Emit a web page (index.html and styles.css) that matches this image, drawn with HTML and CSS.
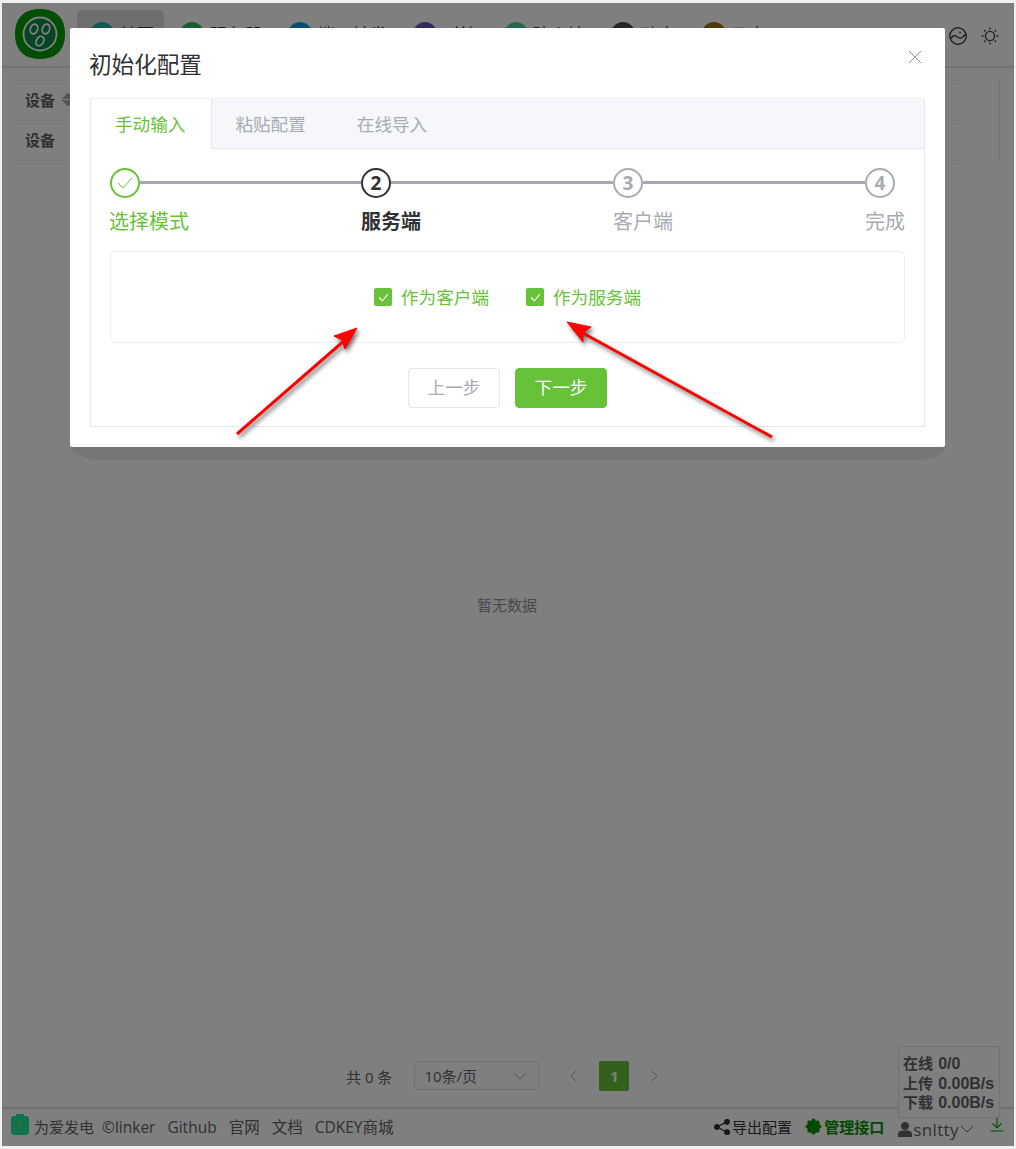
FILE: index.html
```html
<!DOCTYPE html>
<html lang="zh-CN">

<head>
	<meta charset="UTF-8">
	<title>初始化配置</title>
	<link rel="stylesheet" href="styles.css">
</head>

<body>
	<div id="app">
		<header class="topbar">
			<div class="logo">
				<svg width="50" height="50" viewBox="0 0 50 50">
					<path class="logo-bg" d="M25 0C41 0 50 9 50 25S41 50 25 50 0 41 0 25 9 0 25 0Z" />
					<circle class="logo-ring" cx="25" cy="25" r="16.5" />
					<ellipse class="logo-seed" cx="19" cy="20" rx="3.6" ry="5" transform="rotate(20 19 20)" />
					<ellipse class="logo-seed" cx="31" cy="20" rx="3.6" ry="5" transform="rotate(20 31 20)" />
					<ellipse class="logo-seed" cx="25" cy="32" rx="3.6" ry="5" transform="rotate(30 25 32)" />
				</svg>
			</div>
			<nav class="menu">
				<a class="menu-item active"><i class="dot teal"></i>首页</a>
				<a class="menu-item"><i class="dot green"></i>服务器</a>
				<a class="menu-item"><i class="dot blue"></i>端口转发</a>
				<a class="menu-item"><i class="dot purple"></i>对等</a>
				<a class="menu-item"><i class="dot mint"></i>防火墙</a>
				<a class="menu-item"><i class="dot dark"></i>动态</a>
				<a class="menu-item"><i class="dot brown"></i>日志</a>
			</nav>
			<div class="top-icons">
				<svg width="20" height="20" viewBox="0 0 20 20">
					<circle cx="10" cy="10" r="8.2" />
					<path d="M2.4 13C5 9 7 9 9.5 11S14 13 17.6 8" />
					<circle class="fill" cx="12" cy="6.5" r="0.9" />
				</svg>
				<svg width="20" height="20" viewBox="0 0 20 20">
					<circle cx="10" cy="10" r="4.6" />
					<path d="M10 1.5V3.5M10 16.5V18.5M1.5 10H3.5M16.5 10H18.5M4 4L5.4 5.4M14.6 14.6L16 16M4 16L5.4 14.6M14.6 5.4L16 4" />
				</svg>
			</div>
		</header>

		<main class="content">
			<div class="table">
				<div class="table-row"><b>设备</b><span class="sort"></span></div>
				<div class="table-row"><b>设备</b></div>
			</div>
			<div class="empty">暂无数据</div>
			<div class="pager">
				<span>共 0 条</span>
				<div class="page-size">10条/页
					<svg width="14" height="8" viewBox="0 0 14 8"><path d="M1 1L7 7L13 1" /></svg>
				</div>
				<div class="pages">
					<svg width="8" height="12" viewBox="0 0 8 12"><path d="M7 1L2 6L7 11" /></svg>
					<span class="page-num">1</span>
					<svg width="8" height="12" viewBox="0 0 8 12"><path d="M1 1L6 6L1 11" /></svg>
				</div>
			</div>
		</main>

		<footer class="footer">
			<div class="footer-links">
				<svg class="battery" width="18" height="21" viewBox="0 0 18 21">
					<path class="battery-body" d="M5 0H13V2H15.500Q18 2 18 5V18Q18 21 15 21H3Q0 21 0 18V5Q0 2 2.500 2H5Z" />
					<path class="battery-bolt" d="M10 7L6 12H8.500L7.500 16L12 10.500H9.500Z" />
				</svg>
				<a class="sponsor">为爱发电</a>
				<a>©linker</a>
				<a>Github</a>
				<a>官网</a>
				<a>文档</a>
				<a>CDKEY商城</a>
			</div>
			<div class="footer-tools">
				<a class="tool">
					<svg width="16" height="16" viewBox="0 0 16 16">
						<circle cx="3" cy="8" r="2.600" />
						<circle cx="13" cy="2.800" r="2.600" />
						<circle cx="13" cy="13.200" r="2.600" />
						<path d="M3 8L13 2.800M3 8L13 13.200" />
					</svg>导出配置
				</a>
				<a class="tool manage">
					<svg width="17" height="17" viewBox="0 0 17 17">
						<circle cx="8.500" cy="8.500" r="5" />
						<path d="M8.500 0.800V16.200M0.800 8.500H16.200M3.100 3.100L13.900 13.900M3.100 13.900L13.900 3.100" />
					</svg>管理接口
				</a>
				<a class="tool user">
					<svg width="14" height="15" viewBox="0 0 14 15">
						<circle cx="7" cy="4" r="3.600" />
						<path d="M0 15V12.500Q0 9 4 8.500H10Q14 9 14 12.500V15Z" />
					</svg>snltty
					<svg class="chevron" width="14" height="8" viewBox="0 0 14 8"><path d="M1 1L7 7L13 1" /></svg>
				</a>
				<svg class="download" width="14" height="15" viewBox="0 0 14 15">
					<path d="M7 1V10.500M2.500 6.500L7 11L11.500 6.500M0.500 14H13.500" />
				</svg>
			</div>
		</footer>

		<div class="stats">
			<div>在线 <span class="val">0/0</span></div>
			<div>上传 <span class="val">0.00B/s</span></div>
			<div>下载 <span class="val">0.00B/s</span></div>
		</div>
	</div>

	<div class="overlay"></div>

	<section class="modal">
		<div class="modal-head">
			<h2>初始化配置</h2>
			<svg class="close" width="14" height="14" viewBox="0 0 14 14"><path d="M1 1L13 13M13 1L1 13" /></svg>
		</div>
		<div class="tabs">
			<div class="tab-bar">
				<a class="tab active">手动输入</a>
				<a class="tab">粘贴配置</a>
				<a class="tab">在线导入</a>
			</div>
			<div class="tab-body">
				<div class="steps">
					<div class="step done">
						<div class="step-head">
							<span class="step-icon">
								<svg width="16" height="12" viewBox="0 0 16 12"><path d="M1 6L6 11L15 1" /></svg>
							</span>
							<span class="step-line"></span>
						</div>
						<div class="step-title">选择模式</div>
					</div>
					<div class="step current">
						<div class="step-head">
							<span class="step-icon">2</span>
							<span class="step-line"></span>
						</div>
						<div class="step-title">服务端</div>
					</div>
					<div class="step">
						<div class="step-head">
							<span class="step-icon">3</span>
							<span class="step-line"></span>
						</div>
						<div class="step-title">客户端</div>
					</div>
					<div class="step last">
						<div class="step-head">
							<span class="step-icon">4</span>
						</div>
						<div class="step-title">完成</div>
					</div>
				</div>

				<div class="mode-box">
					<label class="check">
						<span class="check-box">
							<svg width="11" height="9" viewBox="0 0 10 8"><path d="M1 4L4 7L9 1" /></svg>
						</span>作为客户端
					</label>
					<label class="check">
						<span class="check-box">
							<svg width="11" height="9" viewBox="0 0 10 8"><path d="M1 4L4 7L9 1" /></svg>
						</span>作为服务端
					</label>
				</div>

				<div class="actions">
					<button class="btn" disabled>上一步</button>
					<button class="btn primary">下一步</button>
				</div>
			</div>
		</div>
	</section>

	<!-- 红色箭头是截图上的标注 -->
	<svg class="arrows" width="1016" height="1149" viewBox="0 0 1016 1149">
		<path d="M357 328L334 336L342 340L345 349Z" />
		<path d="M567 322L591 327L583 333L583 342Z" />
		<path class="shaft" d="M237 434L345 340M772 437L581 332" />
	</svg>
</body>

</html>
```

FILE: styles.css
```css
* {
	box-sizing: border-box;
}

html,
body {
	height: 100%;
}

body {
	margin: 0;
	padding: 3px 2px;
	background-color: #f0f0f0;
	font-family: "Open Sans", "Noto Sans CJK SC", sans-serif;
	color: #606266;
	font-size: 15px;
	overflow: hidden;
}

svg path,
svg circle {
	fill: none;
	stroke: currentColor;
}

#app {
	position: relative;
	display: flex;
	flex-direction: column;
	height: 100%;
	background-color: #fff;
}

/* верх */
.topbar {
	display: flex;
	align-items: flex-start;
	height: 65px;
	padding: 7px 14px 0 13px;
	border-bottom: 2px solid #e4e4e4;
}

.logo {
	width: 50px;
	height: 50px;
	margin-top: -1px;
}

.logo svg .logo-bg {
	fill: #009c00;
	stroke: none;
}

.logo svg .logo-ring {
	fill: #0a8a48;
	stroke: #fff;
	stroke-width: 1.8;
}

.logo .logo-seed {
	fill: none;
	stroke: #fff;
	stroke-width: 1.8;
}

.menu {
	display: flex;
	margin-left: 12px;
}

.menu-item {
	display: flex;
	align-items: flex-start;
	gap: 5px;
	height: 50px;
	margin-right: 3px;
	padding: 12px 10px 0 13px;
	border-radius: 5px;
	font-size: 17.6px;
	line-height: 24px;
	color: #333;
	white-space: nowrap;
}

.menu-item.active {
	background-color: #dcdcdc;
}

.dot {
	display: block;
	width: 24px;
	height: 24px;
	border-radius: 50%;
}

.teal { background-color: #1cb4aa; }
.green { background-color: #30bc5c; }
.blue { background-color: #109cdc; }
.purple { background-color: #6a58bc; }
.mint { background-color: #48d49c; }
.dark { background-color: #4c4c4c; }
.brown { background-color: #a0760e; }

.top-icons {
	display: flex;
	gap: 12px;
	margin-left: auto;
	padding-top: 16px;
	color: #444;
}

.top-icons svg {
	stroke-width: 1.4;
}

.top-icons .fill {
	fill: currentColor;
	stroke: none;
}

/* контент */
.content {
	flex: 1;
	display: flex;
	flex-direction: column;
}

.table {
	margin: 12px 14px 0 13px;
	border-right: 1px solid #ececec;
}

.table-row {
	display: flex;
	align-items: center;
	gap: 7px;
	height: 40px;
	margin-right: 35px;
	padding-left: 10px;
	padding-bottom: 3px;
	border-top: 1px solid #f0f2f6;
	font-size: 15px;
}

.table-row:last-child {
	height: 41px;
	border-bottom: 1px solid #f0f2f6;
}

.sort {
	display: block;
	width: 12px;
	height: 15px;
	background: linear-gradient(135deg, transparent 50%, #a8abb2 50%) left top / 6px 7px no-repeat,
		linear-gradient(225deg, transparent 50%, #a8abb2 50%) right top / 6px 7px no-repeat,
		linear-gradient(45deg, transparent 50%, #a8abb2 50%) left bottom / 6px 7px no-repeat,
		linear-gradient(315deg, transparent 50%, #a8abb2 50%) right bottom / 6px 7px no-repeat;
}

.empty {
	margin-top: 434px;
	padding-right: 2px;
	text-align: center;
	color: #909399;
	line-height: 20px;
}

.pager {
	display: flex;
	align-items: center;
	margin-top: auto;
	margin-bottom: 16px;
	padding-left: 344px;
	height: 30px;
}

.page-size {
	display: flex;
	align-items: center;
	justify-content: space-between;
	width: 125px;
	height: 29px;
	margin-left: 22px;
	margin-top: -1px;
	padding: 0 11px 0 9px;
	border: 1px solid #dcdfe6;
	border-radius: 4px;
}

.page-size svg {
	color: #a8abb2;
}

.pages {
	display: flex;
	align-items: center;
	gap: 22px;
	margin-left: 30px;
	color: #a8abb2;
}

.page-num {
	width: 30px;
	height: 30px;
	background-color: #67c23a;
	border-radius: 2px;
	color: #fff;
	font-weight: bold;
	text-align: center;
	line-height: 30px;
}

/* низ */
.footer {
	display: flex;
	justify-content: space-between;
	align-items: center;
	height: 39px;
	padding: 0 10px 2px 9px;
	border-top: 2px solid #e4e4e4;
}

.footer-links,
.footer-tools,
.tool {
	display: flex;
	align-items: center;
}

.footer-links {
	gap: 12px;
	font-size: 15.5px;
}

.battery {
	margin-top: -4px;
	margin-right: -7px;
}

.battery .battery-body {
	fill: #1ee89a;
	stroke: none;
}

.battery .battery-bolt {
	fill: #7cdd50;
	stroke: none;
}

.sponsor {
	margin-right: -4px;
	font-size: 15px;
}

.footer-tools {
	color: #333;
}

.tool svg path,
.tool svg circle {
	fill: currentColor;
}

.tool {
	gap: 2px;
}

.tool svg path {
	fill: none;
	stroke-width: 1.300;
}

.manage {
	margin-left: 13px;
	color: #009400;
	font-weight: bold;
}

.manage svg circle {
	fill: none;
	stroke-width: 3.200;
}

.manage svg path {
	stroke-width: 3.200;
}

.user {
	margin-left: 14px;
	margin-top: 5px;
	gap: 1px;
	color: #606266;
	font-size: 17px;
	letter-spacing: 0.4px;
}

.user svg path {
	fill: currentColor;
	stroke: none;
}

.user .chevron path {
	fill: none;
	stroke: currentColor;
	stroke-width: 1;
}

.download {
	margin-left: 16px;
	margin-top: -4px;
	color: #00a400;
}

.download path {
	stroke-width: 1.200;
}

.stats {
	position: absolute;
	right: 14px;
	bottom: 28px;
	width: 102px;
	padding: 7px 0 0 4px;
	height: 72px;
	background-color: #fff;
	border: 1px solid #e4e4e4;
	font-family: "Liberation Sans", "Noto Sans CJK SC", sans-serif;
	font-size: 15px;
	font-weight: bold;
	line-height: 19.500px;
	white-space: nowrap;
}

.val {
	margin-left: 1px;
	font-size: 16px;
}

/* диалог */
.overlay {
	position: fixed;
	top: 3px;
	left: 2px;
	right: 2px;
	bottom: 3px;
	background-color: rgba(0, 0, 0, 0.5);
}

.modal {
	position: fixed;
	top: 28px;
	left: 70px;
	width: 875px;
	height: 419px;
	padding: 0 20px;
	background-color: #fff;
	border-radius: 2px;
}

.modal::after {
	content: "";
	position: absolute;
	z-index: -1;
	left: 2px;
	right: 0;
	top: 419px;
	height: 13px;
	background-color: #767676;
	border-radius: 0 0 30px 30px / 0 0 13px 13px;
}

.modal-head {
	display: flex;
	justify-content: space-between;
	height: 70px;
	padding-top: 21px;
}

.modal-head h2 {
	margin: 0 0 0 -1px;
	font-size: 22.600px;
	font-weight: normal;
	line-height: 32px;
	color: #303133;
}

.close {
	margin-top: 1px;
	margin-right: 3px;
	color: #909399;
}

.tabs {
	height: 329px;
	border: 1px solid #e4e7ed;
	border-top-color: #f0f2f5;
}

.tab-bar {
	display: flex;
	height: 50px;
	background-color: #f5f7fa;
	border-bottom: 1px solid #e4e7ed;
}

.tab {
	padding: 0 24px;
	font-size: 17.600px;
	line-height: 50px;
	color: #a8abb2;
	white-space: nowrap;
}

.tab.active + .tab {
	padding-left: 23px;
}

.tab:nth-child(3) {
	padding-left: 27px;
}

.tab.active {
	height: 50px;
	padding-right: 26px;
	background-color: #fff;
	border-right: 1px solid #e4e7ed;
	color: #67c23a;
}

.tab-body {
	padding: 19px 19px 0;
}

.steps {
	display: flex;
}

.step {
	flex: 0 0 252px;
	color: #a8abb2;
}

.step.last {
	flex: 1;
}

.step.done {
	flex-basis: 251px;
	color: #67c23a;
}

.step.current {
	color: #303133;
}

.step-head {
	display: flex;
	align-items: center;
}

.step-icon {
	display: flex;
	flex: none;
	align-items: center;
	justify-content: center;
	width: 30px;
	height: 30px;
	border: 2px solid currentColor;
	border-radius: 50%;
	font-size: 19px;
	font-weight: bold;
	background-color: #fff;
}

.step-icon svg {
	stroke-width: 1;
}

.step-line {
	flex: 1;
	height: 3px;
	margin-top: -1px;
	background-color: #a6a9b3;
}

.step-title {
	margin-top: 10px;
	font-size: 20px;
	line-height: 28px;
	white-space: nowrap;
}

.step.done .step-title {
	margin-left: -1px;
}

.step.current .step-title {
	font-weight: bold;
}

.mode-box {
	display: flex;
	justify-content: center;
	gap: 37px;
	align-items: center;
	height: 92px;
	margin-top: 15px;
	border: 1px solid #ebeef5;
	border-radius: 5px;
}

.check {
	display: flex;
	align-items: center;
	gap: 9px;
	padding-bottom: 2px;
	font-size: 17.600px;
	color: #67c23a;
	white-space: nowrap;
}

.check-box {
	display: flex;
	align-items: center;
	justify-content: center;
	width: 18px;
	height: 18px;
	margin-top: 2px;
	background-color: #67c23a;
	border-radius: 2px;
	color: #fff;
}

.actions {
	display: flex;
	justify-content: center;
	gap: 15px;
	margin-top: 25px;
}

.btn {
	width: 92px;
	height: 40px;
	padding: 0 0 3px;
	background-color: #fff;
	border: 1px solid #e4e7ed;
	border-radius: 4px;
	font-family: inherit;
	font-size: 17.600px;
	color: #a8abb2;
}

.btn.primary {
	background-color: #67c23a;
	border-color: #67c23a;
	color: #fff;
}

.arrows {
	position: fixed;
	top: 0;
	left: 0;
	filter: drop-shadow(2px 3px 2px rgba(0, 0, 0, 0.55));
	pointer-events: none;
}

.arrows path {
	fill: #f00;
	stroke: #f00;
	stroke-width: 1;
}

.arrows .shaft {
	fill: none;
	stroke-width: 3;
}
```
